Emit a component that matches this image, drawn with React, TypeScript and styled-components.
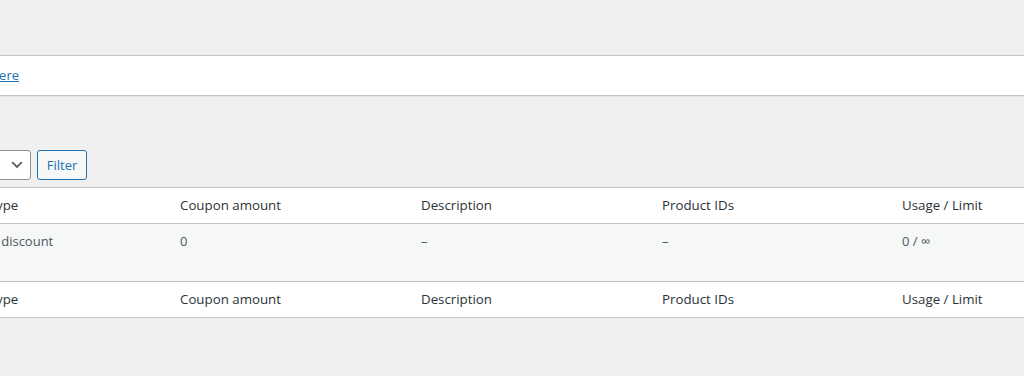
import React from "react";
import styled, { createGlobalStyle } from "styled-components";

const GlobalStyle = createGlobalStyle`
  html, body { margin: 0; padding: 0; background: #f0f0f1; }
  body {
    font-family: "Open Sans", "Noto Sans", sans-serif;
    font-size: 13px;
    color: #3c434a;
    overflow: hidden;
  }
  #root { width: 1024px; height: 376px; overflow: hidden; }
`;

const Page = styled.div`
  width: 1735px;
  margin-left: -360px;
  padding-top: 10px;
  display: flex;
  flex-direction: column;
`;

const Header = styled.div`
  height: 45px;
  display: flex;
  align-items: flex-start;
  gap: 4px;
`;

const Title = styled.h1`
  margin: 0;
  font-size: 23px;
  font-weight: 400;
  line-height: 30px;
  color: #1d2327;
`;

const ActionButton = styled.a`
  display: inline-flex;
  align-items: center;
  height: 30px;
  padding: 0 10px;
  border: 1px solid #2271b1;
  border-radius: 3px;
  color: #2271b1;
  background: #f6f7f7;
  box-sizing: border-box;
  text-decoration: none;
`;

const Notice = styled.div`
  display: flex;
  background: #fff;
  border: 1px solid #c3c4c7;
  border-left: 4px solid #72aee6;
  padding: 10px 12px;
  line-height: 19px;
  box-shadow: 0 1px 1px rgba(0, 0, 0, 0.04);
`;

const NoticeText = styled.p<{ $end: number }>`
  margin: 0;
  flex: 0 0 ${(p) => p.$end}px;
  min-width: 0;
  display: flex;
  justify-content: flex-end;
  white-space: nowrap;
`;

const NoticeLine = styled.span`
  flex: none;
  white-space: nowrap;
`;

const Link = styled.a`
  color: #2271b1;
  text-decoration: underline;
`;

const FilterRow = styled.div`
  margin-top: 14px;
  height: 30px;
  display: flex;
  align-items: center;
  justify-content: space-between;
`;

const SubNav = styled.ul`
  margin: 0;
  padding: 0;
  list-style: none;
  display: flex;
  gap: 4px;
  color: #646970;
`;

const Count = styled.span`
  color: #50575e;
`;

const SearchBox = styled.div`
  display: flex;
  gap: 4px;
`;

const SearchInput = styled.div`
  width: 180px;
  height: 30px;
  box-sizing: border-box;
  border: 1px solid #8c8f94;
  border-radius: 4px;
  background: #fff;
`;

const Tablenav = styled.div`
  margin-top: 10px;
  margin-bottom: 7px;
  height: 30px;
  display: flex;
  align-items: center;
`;

const Actions = styled.div<{ $after: number }>`
  display: flex;
  gap: 6px;
  margin-right: ${(p) => p.$after}px;
`;

const SelectBox = styled.div<{ $w: number }>`
  width: ${(p) => p.$w}px;
  height: 30px;
  box-sizing: border-box;
  border: 1px solid #8c8f94;
  border-radius: 3px;
  background: #fff;
  color: #2c3338;
  display: flex;
  align-items: center;
  justify-content: space-between;
  padding: 0 5px 0 8px;
  font-size: 14px;
`;

const Button = styled.button<{ $w: number }>`
  width: ${(p) => p.$w}px;
  height: 30px;
  box-sizing: border-box;
  border: 1px solid #2271b1;
  border-radius: 3px;
  background: #f6f7f7;
  color: #2271b1;
  font-family: inherit;
  font-size: 13px;
  padding: 0;
  display: flex;
  align-items: center;
  justify-content: center;
`;

const Table = styled.table`
  width: 1735px;
  table-layout: fixed;
  border-collapse: separate;
  border-spacing: 0;
  background: #fff;
  border: 1px solid #c3c4c7;
`;

const HeadCell = styled.th<{ $foot?: boolean }>`
  text-align: left;
  font-weight: 400;
  font-size: 13.3px;
  color: #2c3338;
  padding: 8px 10px;
  line-height: 19px;
  white-space: nowrap;
  overflow: visible;
  ${(p) =>
    p.$foot
      ? "border-top: 1px solid #c3c4c7;"
      : "border-bottom: 1px solid #c3c4c7;"}
`;

const Row = styled.tr`
  background: #f6f7f7;
`;

const Cell = styled.td`
  padding: 8px 10px;
  line-height: 19px;
  vertical-align: top;
  color: #50575e;
  font-size: 13px;
  white-space: nowrap;
`;

const CodeLink = styled.a`
  color: #2271b1;
  font-weight: 600;
  text-decoration: none;
`;

const RowActions = styled.div`
  visibility: hidden;
  padding-top: 3px;
  line-height: 19px;
  font-size: 13px;
`;

const Check = styled.span`
  display: inline-block;
  width: 16px;
  height: 16px;
  border: 1px solid #8c8f94;
  border-radius: 4px;
  background: #fff;
  box-sizing: border-box;
  vertical-align: middle;
`;

const Chevron = () => (
  <svg width="16" height="16" viewBox="0 0 20 20" aria-hidden="true">
    <path d="M5 6l5 5 5-5 2 1-7 7-7-7z" fill="#50575e" />
  </svg>
);

const widths = [40, 248, 241, 241, 241, 240, 241, 241];
const heads = [
  "",
  "Code",
  "Coupon type",
  "Coupon amount",
  "Description",
  "Product IDs",
  "Usage / Limit",
  "Expiry date",
];

const HeadRow = ({ foot }: { foot?: boolean }) => (
  <tr>
    {heads.map((h, i) => (
      <HeadCell key={i} $foot={foot}>
        {i === 0 ? <Check /> : h}
      </HeadCell>
    ))}
  </tr>
);

export default function App() {
  return (
    <>
      <GlobalStyle />
      <Page>
        <Header>
          <Title>Coupons</Title>
          <ActionButton>Add coupon</ActionButton>
        </Header>
        <Notice>
          <NoticeText $end={363}>
            <NoticeLine>
              Coupons can be applied through the cart and checkout pages. Learn more about coupons{" "}
              <Link href="#">here</Link>
            </NoticeLine>
          </NoticeText>
        </Notice>
        <FilterRow>
          <SubNav>
            <li>
              All <Count>(1)</Count> |
            </li>
            <li>
              Published <Count>(1)</Count>
            </li>
          </SubNav>
          <SearchBox>
            <SearchInput />
            <Button $w={110}>Search coupons</Button>
          </SearchBox>
        </FilterRow>
        <Tablenav>
          <Actions $after={50}>
            <SelectBox $w={132}>
              <span>Bulk actions</span>
              <Chevron />
            </SelectBox>
            <Button $w={52}>Apply</Button>
          </Actions>
          <Actions $after={0}>
            <SelectBox $w={151}>
              <span>Show all types</span>
              <Chevron />
            </SelectBox>
            <Button $w={50}>Filter</Button>
          </Actions>
        </Tablenav>
        <Table>
          <colgroup>
            {widths.map((w, i) => (
              <col key={i} style={{ width: w }} />
            ))}
          </colgroup>
          <thead>
            <HeadRow />
          </thead>
          <tbody>
            <Row>
              <Cell>
                <Check />
              </Cell>
              <Cell>
                <CodeLink href="#">summer-sale</CodeLink>
                <RowActions>Edit | Trash</RowActions>
              </Cell>
              <Cell>Fixed cart discount</Cell>
              <Cell>0</Cell>
              <Cell>–</Cell>
              <Cell>–</Cell>
              <Cell>0 / ∞</Cell>
              <Cell>–</Cell>
            </Row>
          </tbody>
          <tfoot>
            <HeadRow foot />
          </tfoot>
        </Table>
      </Page>
    </>
  );
}
